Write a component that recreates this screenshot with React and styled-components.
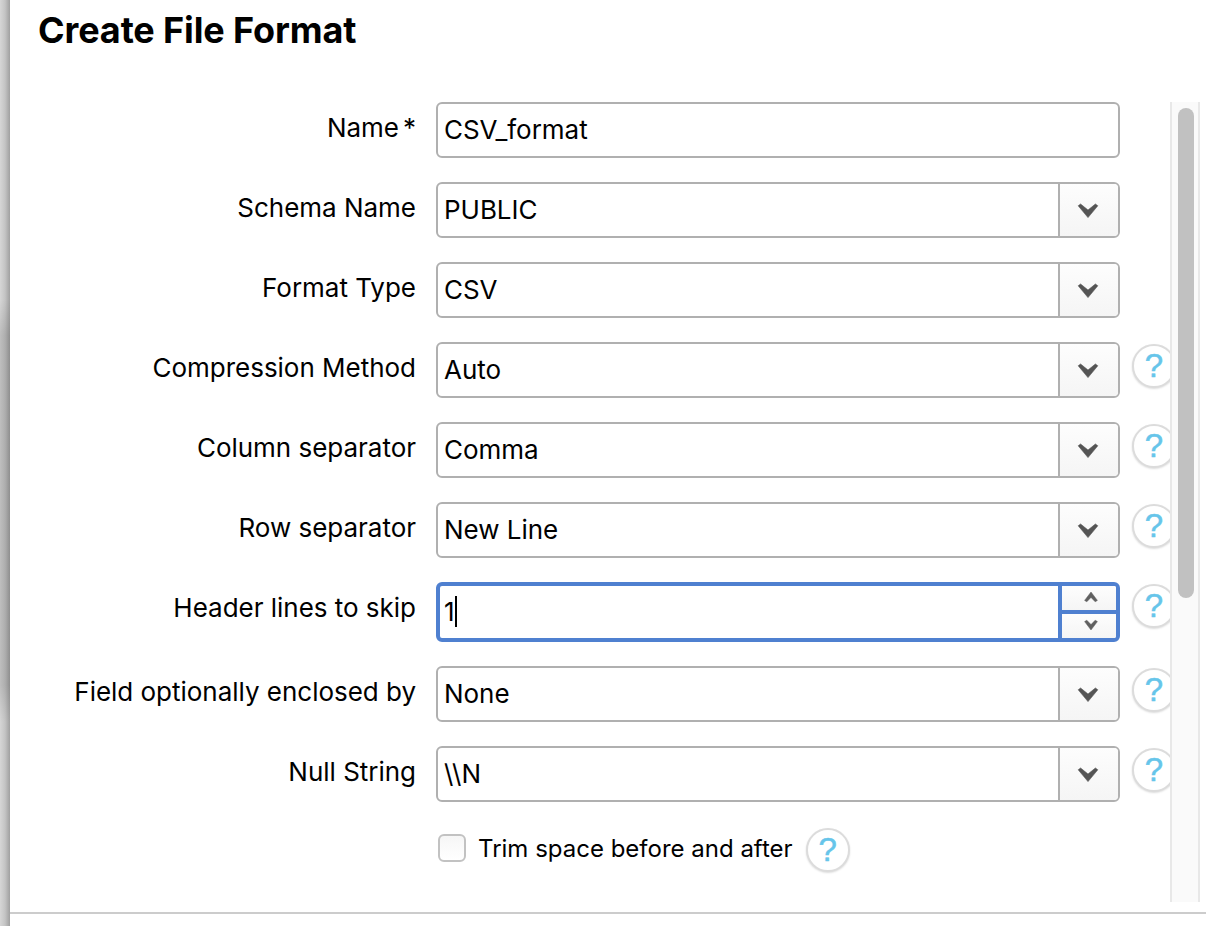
import React from 'react';
import styled, { createGlobalStyle, css } from 'styled-components';

const GlobalStyle = createGlobalStyle`
  * { box-sizing: border-box; }
  html, body { margin: 0; padding: 0; }
  body {
    background: #d9d9d9;
    font-family: Inter, "Liberation Sans", sans-serif;
    color: #000;
    overflow: hidden;
  }
`;

const Page = styled.div`
  display: flex;
  width: 1206px;
  height: 926px;
  overflow: hidden;
`;

const Backdrop = styled.div`
  flex: 0 0 10px;
  background:
    linear-gradient(to bottom,
      rgba(0, 0, 0, 0) 300px,
      rgba(0, 0, 0, 0.11) 335px,
      rgba(0, 0, 0, 0.11) 685px,
      rgba(0, 0, 0, 0) 722px),
    linear-gradient(to right, #d6d6d6, #c4c4c4 50%, #a0a0a0);
`;

const Dialog = styled.section`
  flex: 1;
  min-width: 0;
  display: flex;
  flex-direction: column;
  background: #fff;
`;

const Title = styled.h1`
  margin: 0;
  height: 102px;
  padding: 8px 0 0 28px;
  font-size: 36px;
  line-height: 44px;
  font-weight: 700;
  letter-spacing: -0.12px;
`;

const Body = styled.div`
  display: flex;
  height: 800px;
  width: 1190px;
`;

const Form = styled.div`
  flex: 1;
  min-width: 0;
  display: flex;
  flex-direction: column;
  gap: 24px;
  overflow: hidden;
`;

const Row = styled.div`
  display: flex;
  align-items: flex-start;
`;

const Label = styled.label`
  flex: 0 0 406px;
  margin-right: 20px;
  text-align: right;
  font-size: 26px;
  line-height: 52px;
  letter-spacing: -0.02px;
  white-space: nowrap;
`;

const Required = styled.span`
  margin-left: 4px;
`;

const Field = styled.div`
  flex: 0 0 684px;
  height: 56px;
  display: flex;
  border: 2px solid #b0b0b0;
  border-radius: 6px;
  background: #fff;
  overflow: hidden;
  ${(p) => p.$focused && css`
    height: 60px;
    border: 4px solid #4f80d0;
  `}
`;

const Value = styled.div`
  flex: 1;
  display: flex;
  align-items: center;
  padding-left: ${(p) => (p.$focused ? 4 : 6)}px;
  font-size: 26px;
  line-height: 52px;
  letter-spacing: -0.03px;
  white-space: pre;
`;

const Caret = styled.span`
  width: 2px;
  height: 31px;
  margin-top: -1px;
  background: #000;
`;

const Trigger = styled.button`
  flex: 0 0 60px;
  display: flex;
  align-items: center;
  justify-content: center;
  padding: 1px 2px 0 0;
  border: 0;
  border-left: 2px solid #b0b0b0;
  background: linear-gradient(#fdfdfd, #f5f5f5);
`;

const Stepper = styled.div`
  flex: 0 0 58px;
  display: flex;
  flex-direction: column;
  border-left: 4px solid #4f80d0;
`;

const Step = styled.button`
  flex: 1;
  display: flex;
  align-items: center;
  justify-content: center;
  padding: 0 0 2px 4px;
  border: 0;
  background: linear-gradient(#fdfdfd, #f5f5f5);
  & + & { border-top: 4px solid #4f80d0; }
`;

const HelpBadge = styled.span`
  flex: 0 0 44px;
  height: 44px;
  margin: ${(p) => (p.$inline ? '0 0 0 13px' : '2px 0 0 12px')};
  border: 2px solid #dcdcdc;
  border-radius: 50%;
  background: #fff;
  box-shadow: 0 1px 2px rgba(0, 0, 0, 0.14);
  color: #66c5ea;
  font: 33px/40px "Liberation Sans", Arial, sans-serif;
  -webkit-text-stroke: 0.5px #66c5ea;
  text-align: center;
`;

const CheckRow = styled.div`
  display: flex;
  align-items: flex-start;
  padding: 2px 0 0 428px;
`;

const Checkbox = styled.span`
  width: 28px;
  height: 28px;
  margin: 6px 12px 0 0;
  border: 2px solid #c2c2c2;
  border-radius: 6px;
  background: linear-gradient(#f6f6f6, #fff);
`;

const CheckLabel = styled.span`
  font-size: 24px;
  line-height: 41px;
  white-space: nowrap;
`;

const Track = styled.div`
  flex: 0 0 30px;
  padding: 6px 4px 0 6px;
  border: solid #e8e8e8;
  border-width: 0 2px;
  background: #fafafa;
`;

const Thumb = styled.div`
  width: 16px;
  height: 490px;
  border-radius: 8px;
  background: #c1c1c1;
`;

const Footer = styled.footer`
  margin-top: 10px;
  border-top: 2px solid #cccccc;
`;

const DownArrow = () => (
  <svg width="22" height="16" viewBox="0 0 22 16">
    <path d="M1.2 2.8 L3.6 1 L11 7 L18.4 1 L20.8 2.8 L11 14.6 Z" fill="#555" stroke="#555" strokeWidth="0.6" strokeLinejoin="round" />
  </svg>
);

const SmallArrow = ({ up }) => (
  <svg width="14" height="12" viewBox="0 0 14 12">
    <path
      d={up ? 'M0.6 9.4 L7 1 L13.4 9.4 L11.2 10.8 L7 6.4 L2.8 10.8 Z' : 'M0.6 2.6 L7 11 L13.4 2.6 L11.2 1.2 L7 5.6 L2.8 1.2 Z'}
      fill="#606060"
      stroke="#606060"
      strokeWidth="0.5"
      strokeLinejoin="round"
    />
  </svg>
);

const Help = ({ inline }) => <HelpBadge $inline={inline}>?</HelpBadge>;

const rows = [
  { label: 'Name', value: 'CSV_format', kind: 'text', required: true },
  { label: 'Schema Name', value: 'PUBLIC' },
  { label: 'Format Type', value: 'CSV' },
  { label: 'Compression Method', value: 'Auto', help: true },
  { label: 'Column separator', value: 'Comma', help: true },
  { label: 'Row separator', value: 'New Line', help: true },
  { label: 'Header lines to skip', value: '1', kind: 'number', help: true },
  { label: 'Field optionally enclosed by', value: 'None', help: true },
  { label: 'Null String', value: '\\\\N', help: true },
];

export default function App() {
  return (
    <Page>
      <GlobalStyle />
      <Backdrop />
      <Dialog>
        <Title>Create File Format</Title>
        <Body>
          <Form>
            {rows.map(({ label, value, kind, help, required }) => (
              <Row key={label}>
                <Label>
                  {label}
                  {required && <Required>*</Required>}
                </Label>
                <Field $focused={kind === 'number'}>
                  <Value $focused={kind === 'number'}>
                    {value}
                    {kind === 'number' && <Caret />}
                  </Value>
                  {!kind && <Trigger aria-label={label}><DownArrow /></Trigger>}
                  {kind === 'number' && (
                    <Stepper>
                      <Step aria-label="Increase"><SmallArrow up /></Step>
                      <Step aria-label="Decrease"><SmallArrow /></Step>
                    </Stepper>
                  )}
                </Field>
                {help && <Help />}
              </Row>
            ))}
            <CheckRow>
              <Checkbox />
              <CheckLabel>Trim space before and after</CheckLabel>
              <Help inline />
            </CheckRow>
          </Form>
          <Track><Thumb /></Track>
        </Body>
        <Footer />
      </Dialog>
    </Page>
  );
}
